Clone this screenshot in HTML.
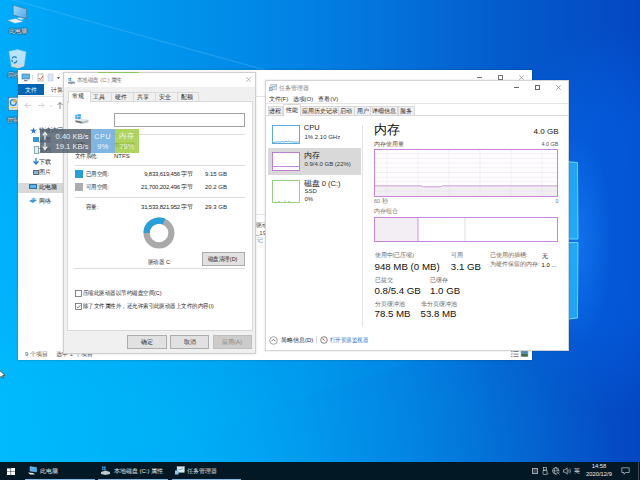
<!DOCTYPE html>
<html><head><meta charset="utf-8">
<style>
*{margin:0;padding:0;box-sizing:border-box}
html,body{width:640px;height:480px;overflow:hidden}
body{position:relative;font-family:"Liberation Sans",sans-serif;font-size:6px;color:#1e1e1e;background:#0870d8}
.a{position:absolute}
.t{position:absolute;white-space:nowrap;line-height:1}
#bg{left:0;top:0;width:640px;height:480px;
 background:
  radial-gradient(130px 210px at 610px 220px,rgba(4,112,252,0.34) 0%,rgba(4,112,252,0.33) 50%,rgba(4,112,252,0.18) 70%,rgba(4,112,252,0) 92%),
  radial-gradient(560px 380px at 60px 480px,rgba(0,194,255,0.6) 0%,rgba(0,194,255,0.58) 25%,rgba(0,194,255,0.34) 50%,rgba(0,194,255,0.2) 75%,rgba(0,194,255,0.08) 90%,rgba(0,194,255,0) 100%),
  linear-gradient(90deg,rgb(0,172,250) 0px,rgb(0,162,244) 60px,rgb(0,144,234) 200px,rgb(2,130,228) 300px,rgb(3,112,218) 400px,rgb(4,92,204) 500px,rgb(4,74,196) 620px,rgb(4,71,194) 640px);}
.win{background:#fff}
.s9{transform:scaleX(.91);transform-origin:0 50%}
.lbl{color:#fff;text-shadow:0 0 2px #000,0 0 1px #000;font-size:6px}
</style></head><body>
<div id="bg" class="a"></div>
<!-- light streak -->
<svg class="a" style="left:0;top:0" width="640" height="480">
 <line x1="0" y1="-3.6" x2="300" y2="79.8" stroke="rgba(130,210,255,0.22)" stroke-width="1.4"/>
 <polygon points="0,462 100,462 450,350 0,350" fill="rgba(0,200,255,0.06)"/>
 <!-- windows logo panes -->
 <defs><radialGradient id="glow" cx="0.5" cy="0.5" r="0.5"><stop offset="0" stop-color="rgba(30,140,255,0.5)"/><stop offset="0.6" stop-color="rgba(30,140,255,0.2)"/><stop offset="1" stop-color="rgba(30,140,255,0)"/></radialGradient></defs>
 <ellipse cx="576" cy="240" rx="36" ry="105" fill="url(#glow)"/>
 <polygon points="560,161 577.5,162.5 578,239 560,239" fill="rgba(40,190,255,0.72)"/>
 <polyline points="560,161 577.5,162.5 578,239 560,239" fill="none" stroke="rgba(120,235,255,0.9)" stroke-width="0.9"/>
 <polygon points="560,242.5 578,242.5 577.5,318 560,320" fill="rgba(40,190,255,0.72)"/>
 <polyline points="560,242.5 578,242.5 577.5,318 560,320" fill="none" stroke="rgba(120,235,255,0.9)" stroke-width="0.9"/>
</svg>

<!-- desktop icons -->
<svg class="a" style="left:0;top:0" width="40" height="120" viewBox="0 0 40 120">
 <defs>
  <linearGradient id="scr" x1="0" y1="0" x2="1" y2="1"><stop offset="0" stop-color="#a6dcfa"/><stop offset="1" stop-color="#4aa8ea"/></linearGradient>
 </defs>
 <polygon points="13.2,5.2 26.6,9.1 26.6,18.6 13.2,15.1" fill="url(#scr)" stroke="#5f6a73" stroke-width="0.6"/>
 <polygon points="16.7,18 20,17.4 24.5,19 21,19.8" fill="#dfe5ea"/>
 <polygon points="8,20.2 15.5,18.8 22.8,21.6 15,23.2" fill="#eaeef1" stroke="#c9d1d7" stroke-width="0.3"/>
 <polygon points="9,51.5 17.5,49.6 26,52 24,66 18.5,68 11.5,66.5" fill="rgba(222,240,250,0.82)" stroke="#a9d0e6" stroke-width="0.5"/>
 <polyline points="9,51.5 18,54 26,52" fill="none" stroke="#c8e4f2" stroke-width="0.5"/>
 <line x1="18" y1="54" x2="18.5" y2="68" stroke="#c0dcea" stroke-width="0.4"/>
 <polygon points="11.5,64 18.5,65.5 24,63.5 24,66 18.5,68 11.5,66.5" fill="rgba(236,206,186,0.7)"/>
 <path d="M12.2 58.3 A2.6 2.6 0 0 1 16.6 57.8 M17 60.5 A2.6 2.6 0 0 1 13.6 62.6 M12.6 62 A2.6 2.6 0 0 1 12 59.6" fill="none" stroke="#1f78d6" stroke-width="1.3"/>
 <rect x="8.3" y="97.2" width="10" height="13" fill="#cfe9f8" stroke="#2d5f94" stroke-width="0.6"/>
 <circle cx="13.3" cy="102.6" r="2.9" fill="none" stroke="#2b82d2" stroke-width="1.3"/>
 <path d="M13.3 99 L13.3 102.6 L16.7 101.8 A3.5 3.5 0 0 0 13.3 99 Z" fill="#f2a71e"/>
 <rect x="10.5" y="107" width="6" height="1.2" fill="#f0c24a"/>
</svg>
<div class="t lbl" style="left:9.3px;top:27.8px">此电脑</div>
<div class="t lbl" style="left:8px;top:71.8px">回收站</div>
<div class="t lbl" style="left:7px;top:117.4px">控制面板</div>

<!-- EXPLORER -->
<div id="explorer" class="a win" style="left:18px;top:70px;width:514px;height:290px;box-shadow:0 0 2px rgba(0,0,0,.3)">
 <!-- quick access toolbar -->
 <svg class="a" style="left:3px;top:3px" width="44" height="10" viewBox="0 0 44 10">
  <rect x="1" y="1" width="7.5" height="5" fill="#5db8ee" stroke="#2f6f9f" stroke-width="0.6"/>
  <rect x="3" y="7" width="3.5" height="1.2" fill="#7a8a96"/>
  <rect x="11.5" y="2" width="0.6" height="5" fill="#bbb"/>
  <rect x="17" y="1" width="5" height="7" fill="#fff" stroke="#8a8a8a" stroke-width="0.6"/>
  <path d="M18 5 L19.3 6.5 L22 3" stroke="#e8501a" stroke-width="0.9" fill="none"/>
  <rect x="27" y="1" width="5" height="7" fill="#dde8f4" stroke="#a9bfd6" stroke-width="0.5"/>
  <path d="M36 4.2 L39 4.2 L37.5 6 Z" fill="#333"/>
 </svg>
 <!-- title buttons -->
 <div class="a" style="left:459px;top:7px;width:5px;height:0.6px;background:#777"></div>
 <div class="a" style="left:479.5px;top:4.5px;width:5px;height:5px;border:0.6px solid #777"></div>
 <svg class="a" style="left:500.75px;top:4.5px" width="5" height="5" viewBox="0 0 5 5"><path d="M0.3 0.3 L4.7 4.7 M4.7 0.3 L0.3 4.7" stroke="#777" stroke-width="0.6"/></svg>
 <!-- ribbon tabs -->
 <div class="a" style="left:0;top:14px;width:26px;height:11px;background:#0066b4"></div>
 <div class="t" style="left:7px;top:16.5px;color:#fff;font-size:6px">文件</div>
 <div class="t" style="left:33px;top:16.5px;color:#333;font-size:6px">计算机</div>
 <div class="a" style="left:0;top:25.5px;width:514px;height:1px;background:#e3e3e3"></div>
 <!-- nav arrows -->
 <svg class="a" style="left:6px;top:31px" width="44" height="9" viewBox="0 0 44 9">
  <path d="M1 4.5 L7 4.5 M1 4.5 L3.5 2 M1 4.5 L3.5 7" stroke="#c0c0c0" stroke-width="0.7" fill="none"/>
  <path d="M14 4.5 L20 4.5 M20 4.5 L17.5 2 M20 4.5 L17.5 7" stroke="#c0c0c0" stroke-width="0.7" fill="none"/>
  <path d="M25.5 4 L27 5.5 L28.5 4" stroke="#c0c0c0" stroke-width="0.6" fill="none"/>
  <path d="M36 1.5 L36 8 M36 1.5 L33.5 4 M36 1.5 L38.5 4" stroke="#555" stroke-width="0.7" fill="none"/>
 </svg>
 <!-- sidebar -->
 <svg class="a" style="left:12px;top:57px" width="7" height="7" viewBox="0 0 10 10"><polygon points="5,0.5 6.3,3.8 9.8,3.8 7,6 8,9.5 5,7.4 2,9.5 3,6 0.2,3.8 3.7,3.8" fill="#2a7ad2"/></svg>
 <div class="t" style="left:21px;top:56.5px;color:#333">快速访问</div>
 <div class="a" style="left:15px;top:67px;width:6px;height:5px;background:#3596e0"></div>
 <div class="t" style="left:21px;top:67px;color:#333">桌面</div>
 <div class="a" style="left:16px;top:76px;width:5px;height:8px;background:#e8eef4;border:0.5px solid #8aa"></div>
 <div class="t" style="left:21px;top:77px;color:#333">文档</div>
 <svg class="a" style="left:15px;top:88px" width="6" height="7" viewBox="0 0 6 7"><path d="M3 0 L3 5.5 M0.5 3.2 L3 6 L5.5 3.2" stroke="#2a7ad2" stroke-width="1.3" fill="none"/></svg>
 <div class="t" style="left:21px;top:89px;color:#333">下载</div>
 <div class="a" style="left:15px;top:100px;width:6px;height:4.5px;background:#8fb4cc;border:0.5px solid #667"></div>
 <div class="t" style="left:21px;top:99px;color:#333">图片</div>
 <div class="a" style="left:0;top:112.5px;width:45px;height:10px;background:#d9d9d9"></div>
 <div class="a" style="left:11px;top:114px;width:8px;height:5px;background:#58b6f0;border:0.5px solid #2f6f9f"></div>
 <div class="t" style="left:21px;top:114px;color:#222">此电脑</div>
 <svg class="a" style="left:11px;top:127px" width="8" height="7" viewBox="0 0 8 7"><polygon points="0,4 4,2 8,3 4,6" fill="#3b9ae0"/><polygon points="2,2 5,0.5 7,1.5 4,3" fill="#74c0f0"/></svg>
 <div class="t" style="left:21px;top:128px;color:#333">网络</div>
 <!-- content snippets visible between windows -->
 <div class="a" style="left:238px;top:144px;width:10px;height:0.6px;background:#e5e5e5"></div>
 <div class="t" style="left:238px;top:152px;color:#444;font-size:6px">驱动</div>
 <div class="t" style="left:238px;top:160px;color:#444;font-size:6px">_19</div>
 <div class="t" style="left:239px;top:167px;color:#999;font-size:6px">记</div>
 <!-- status bar -->
 <div class="t" style="left:7px;top:281px;color:#555">9 个项目</div>
 <div class="t" style="left:38px;top:281px;color:#555">选中 1 个项目</div>
 <svg class="a" style="left:493px;top:280px" width="18" height="8" viewBox="0 0 18 8">
  <rect x="0" y="1" width="1.6" height="1.2" fill="#8aa"/><rect x="2.5" y="1.2" width="5" height="0.8" fill="#666"/>
  <rect x="0" y="3.5" width="1.6" height="1.2" fill="#8aa"/><rect x="2.5" y="3.7" width="5" height="0.8" fill="#666"/>
  <rect x="0" y="6" width="1.6" height="1.2" fill="#d88"/><rect x="2.5" y="6.2" width="5" height="0.8" fill="#666"/>
  <rect x="10" y="1" width="7" height="5.5" fill="#4a8fc0" stroke="#aaa" stroke-width="0.6"/>
  <rect x="10.5" y="4" width="6" height="2.5" fill="#3d7040"/>
 </svg>
</div>

<!-- PROPERTIES DIALOG -->
<div id="props" class="a" style="left:63px;top:72px;width:193px;height:282px;background:#f0f0f0;border:1px solid #cfcfcf;box-shadow:0 0 2px rgba(0,0,0,.15)">
 <div class="a" style="left:0;top:0;width:191px;height:14px;background:#fff"></div>
 <svg class="a" style="left:4px;top:5px" width="7" height="6" viewBox="0 0 7 6">
  <rect x="0.5" y="0" width="1.2" height="1.2" fill="#1e90e0"/><rect x="2" y="0" width="1.2" height="1.2" fill="#1e90e0"/>
  <rect x="0.5" y="1.5" width="1.2" height="1.2" fill="#1e90e0"/><rect x="2" y="1.5" width="1.2" height="1.2" fill="#1e90e0"/>
  <polygon points="0,4 4,3.2 7,4 7,5.5 3,6 0,5.5" fill="#8a9aa6"/>
 </svg>
 <div class="t s9" style="left:13px;top:4px;color:#777;font-size:6px">本地磁盘 (C:) 属性</div>
 <svg class="a" style="left:181.9px;top:4.1px" width="5" height="5" viewBox="0 0 5 5"><path d="M0.3 0.3 L4.7 4.7 M4.7 0.3 L0.3 4.7" stroke="#888" stroke-width="0.6"/></svg>
 <!-- tabs -->
 <div class="a" style="left:26px;top:19px;width:22px;height:10px;background:#f0f0f0;border:1px solid #d9d9d9;border-bottom:none"></div>
 <div class="t" style="left:29px;top:21px">工具</div>
 <div class="a" style="left:47px;top:19px;width:23px;height:10px;background:#f0f0f0;border:1px solid #d9d9d9;border-bottom:none"></div>
 <div class="t" style="left:51px;top:21px">硬件</div>
 <div class="a" style="left:69px;top:19px;width:23px;height:10px;background:#f0f0f0;border:1px solid #d9d9d9;border-bottom:none"></div>
 <div class="t" style="left:73px;top:21px">共享</div>
 <div class="a" style="left:91px;top:19px;width:23px;height:10px;background:#f0f0f0;border:1px solid #d9d9d9;border-bottom:none"></div>
 <div class="t" style="left:95px;top:21px">安全</div>
 <div class="a" style="left:113px;top:19px;width:22px;height:10px;background:#f0f0f0;border:1px solid #d9d9d9;border-bottom:none"></div>
 <div class="t" style="left:117px;top:21px">配额</div>
 <!-- content panel -->
 <div class="a" style="left:3px;top:28px;width:186px;height:230px;background:#fff;border:1px solid #d9d9d9"></div>
 <div class="a" style="left:4px;top:17.5px;width:23px;height:12px;background:#fff;border:1px solid #d9d9d9;border-bottom:none"></div>
 <div class="t" style="left:7.5px;top:20px">常规</div>
 <!-- drive icon -->
 <svg class="a" style="left:11px;top:40.5px" width="14" height="10" viewBox="0 0 14 10">
  <polygon points="0.3,0.9 2.6,0.5 2.6,2.6 0.3,2.8" fill="#2fa3ee"/><polygon points="3,0.4 5.8,0 5.8,2.6 3,2.6" fill="#2fa3ee"/>
  <polygon points="0.3,3.1 2.6,3 2.6,5 0.3,4.8" fill="#2fa3ee"/><polygon points="3,3 5.8,3 5.8,5.3 3,5" fill="#2fa3ee"/>
  <polygon points="0.3,6.2 6,4.6 13.4,6.2 7.6,7.8" fill="#e6eaed" stroke="#b9c2c8" stroke-width="0.3"/>
  <polygon points="0.3,6.2 7.6,7.8 7.6,9.8 0.3,8.2" fill="#8d979e"/>
  <polygon points="7.6,7.8 13.4,6.2 13.4,8.2 7.6,9.8" fill="#b3bcc2"/>
  <line x1="1.2" y1="7.3" x2="6.6" y2="8.5" stroke="#3c4348" stroke-width="0.6"/>
 </svg>
 <div class="a" style="left:50px;top:39.5px;width:131px;height:14px;background:#fff;border:1px solid #a2a2a2"></div>
 <div class="a" style="left:11px;top:60.5px;width:170px;height:1px;background:#dcdcdc"></div>
 <div class="t s9" style="left:11px;top:69px">类型:</div>
 <div class="t s9" style="left:50px;top:69px">本地磁盘</div>
 <div class="t s9" style="left:11px;top:80px">文件系统:</div>
 <div class="t" style="left:50px;top:80px">NTFS</div>
 <div class="a" style="left:11px;top:91.5px;width:170px;height:1px;background:#dcdcdc"></div>
 <div class="a" style="left:11px;top:97px;width:8px;height:8px;background:#26a0da"></div>
 <div class="t s9" style="left:22px;top:98px">已用空间:</div>
 <div class="t" style="left:60px;top:98px;width:69px;text-align:right;letter-spacing:-0.2px">9,833,619,456 字节</div>
 <div class="t" style="left:141px;top:98px">9.15 GB</div>
 <div class="a" style="left:11px;top:110px;width:8px;height:8px;background:#adadad"></div>
 <div class="t s9" style="left:22px;top:111px">可用空间:</div>
 <div class="t" style="left:60px;top:111px;width:69px;text-align:right;letter-spacing:-0.2px">21,700,202,496 字节</div>
 <div class="t" style="left:141px;top:111px">20.2 GB</div>
 <div class="a" style="left:11px;top:124px;width:170px;height:1px;background:#dcdcdc"></div>
 <div class="t s9" style="left:22px;top:131px">容量:</div>
 <div class="t" style="left:60px;top:131px;width:69px;text-align:right;letter-spacing:-0.2px">31,533,821,952 字节</div>
 <div class="t" style="left:141px;top:131px">29.3 GB</div>
 <!-- donut -->
 <svg class="a" style="left:78px;top:143px" width="34" height="34" viewBox="0 0 34 34">
  <circle cx="17" cy="17" r="12.4" fill="none" stroke="#a9a9a9" stroke-width="6.2"/>
  <path d="M4.6 17 A12.4 12.4 0 0 1 22.04 5.67" fill="none" stroke="#26a0da" stroke-width="6.2"/>
 </svg>
 <div class="t s9" style="left:84px;top:186px">驱动器 C:</div>
 <div class="a" style="left:137.5px;top:178.5px;width:43px;height:14px;background:#e1e1e1;border:1px solid #adadad"></div>
 <div class="t s9" style="left:144px;top:182.5px">磁盘清理(D)</div>
 <div class="a" style="left:10px;top:195px;width:171px;height:1px;background:#dcdcdc"></div>
 <svg class="a" style="left:10.5px;top:216.5px" width="7" height="7" viewBox="0 0 7 7"><rect x="0.5" y="0.5" width="6" height="6" fill="#fff" stroke="#6a6a6a" stroke-width="0.8"/></svg>
 <div class="t s9" style="left:19px;top:217px">压缩此驱动器以节约磁盘空间(C)</div>
 <svg class="a" style="left:10.5px;top:230.3px" width="7" height="7" viewBox="0 0 7 7"><rect x="0.5" y="0.5" width="6" height="6" fill="#fff" stroke="#6a6a6a" stroke-width="0.8"/><path d="M1.5 3.6 L2.9 5 L5.6 1.9" stroke="#444" stroke-width="0.7" fill="none"/></svg>
 <div class="t s9" style="left:19px;top:230px">除了文件属性外，还允许索引此驱动器上文件的内容(I)</div>
 <!-- buttons -->
 <div class="a" style="left:62.5px;top:262px;width:40px;height:14px;background:#e1e1e1;border:1px solid #adadad"></div>
 <div class="t" style="left:77px;top:266px">确定</div>
 <div class="a" style="left:106px;top:262px;width:39px;height:14px;background:#e1e1e1;border:1px solid #adadad"></div>
 <div class="t" style="left:120px;top:266px">取消</div>
 <div class="a" style="left:149px;top:262px;width:39px;height:14px;background:#cccccc;border:1px solid #bfbfbf"></div>
 <div class="t" style="left:158px;top:266px;color:#838383">应用(A)</div>
</div>

<div class="a" style="left:98px;top:72px;width:41px;height:1px;background:#8cc860"></div>
<!-- TASK MANAGER -->
<div id="tm" class="a win" style="left:265px;top:80px;width:304px;height:271px;border:1px solid #d4d4d4;box-shadow:0 0 2px rgba(0,0,0,.15)">
 <svg class="a" style="left:2.9px;top:3.2px" width="8" height="7" viewBox="0 0 8 7">
  <rect x="1.8" y="0.4" width="6" height="5" fill="#e4ecf1" stroke="#8a9aa6" stroke-width="0.5"/>
  <path d="M2.4 3.8 L3.8 2.3 L4.8 3.3 L7 1.3" stroke="#2a9ad8" stroke-width="0.7" fill="none"/>
  <rect x="0.2" y="3.6" width="3" height="3.2" fill="#a9cfe4" stroke="#6e8896" stroke-width="0.4"/>
 </svg>
 <div class="t" style="left:13px;top:3.7px;color:#777">任务管理器</div>
 <div class="a" style="left:248.4px;top:6.3px;width:5px;height:0.6px;background:#666"></div>
 <div class="a" style="left:269.25px;top:4px;width:4.8px;height:4.8px;border:0.6px solid #666"></div>
 <svg class="a" style="left:290px;top:4px" width="5" height="5" viewBox="0 0 5 5"><path d="M0.3 0.3 L4.7 4.7 M4.7 0.3 L0.3 4.7" stroke="#666" stroke-width="0.6"/></svg>
 <div class="a" style="left:0;top:22px;width:302px;height:0.6px;background:#e6e6e6"></div>
 <div class="t" style="left:2.5px;top:14.5px;color:#333">文件(F)</div>
 <div class="t" style="left:26.5px;top:14.5px;color:#333">选项(O)</div>
 <div class="t" style="left:52.25px;top:14.5px;color:#333">查看(V)</div>
 <!-- tabs -->
 <div class="a" style="left:0;top:33.5px;width:302px;height:1px;background:#d9d9d9"></div>
 <div class="a" style="left:1.75px;top:24.5px;width:15.5px;height:9.5px;background:#f0f0f0;border:1px solid #d9d9d9;border-bottom:none"></div>
 <div class="t" style="left:3px;top:26.5px;color:#222">进程</div>
 <div class="a" style="left:34px;top:24.5px;width:38.5px;height:9.5px;background:#f0f0f0;border:1px solid #d9d9d9;border-bottom:none"></div>
 <div class="t" style="left:35.5px;top:26.5px;color:#222">应用历史记录</div>
 <div class="a" style="left:71.75px;top:24.5px;width:16.75px;height:9.5px;background:#f0f0f0;border:1px solid #d9d9d9;border-bottom:none"></div>
 <div class="t" style="left:74px;top:26.5px;color:#222">启动</div>
 <div class="a" style="left:88px;top:24.5px;width:16.75px;height:9.5px;background:#f0f0f0;border:1px solid #d9d9d9;border-bottom:none"></div>
 <div class="t" style="left:90.5px;top:26.5px;color:#222">用户</div>
 <div class="a" style="left:104.25px;top:24.5px;width:28px;height:9.5px;background:#f0f0f0;border:1px solid #d9d9d9;border-bottom:none"></div>
 <div class="t" style="left:106px;top:26.5px;color:#222">详细信息</div>
 <div class="a" style="left:131.75px;top:24.5px;width:16.75px;height:9.5px;background:#f0f0f0;border:1px solid #d9d9d9;border-bottom:none"></div>
 <div class="t" style="left:134px;top:26.5px;color:#222">服务</div>
 <div class="a" style="left:16.5px;top:23px;width:18px;height:11.5px;background:#fff;border:1px solid #d9d9d9;border-bottom:none"></div>
 <div class="t" style="left:19.5px;top:25.5px;color:#222">性能</div>
 <!-- left panel -->
 <div class="a" style="left:1.6px;top:67.2px;width:93px;height:26.5px;background:#d9d9d9"></div>
 <svg class="a" style="left:6px;top:44px" width="28" height="19" viewBox="0 0 28 19">
  <rect x="0.5" y="0.5" width="27" height="18" fill="#fff" stroke="#4aa3df" stroke-width="0.9"/>
  <path d="M1 17.5 L4 17 L6 16.8 L8 17.2 L10 16.5 L12 17 L14 16 L15 17 L17 15.8 L18 17 L20 16.6 L22 17.2 L27 17" stroke="#4aa3df" stroke-width="0.8" fill="none"/>
 </svg>
 <div class="t" style="left:37.75px;top:43.3px;font-size:7.5px;color:#1a1a1a">CPU</div>
 <div class="t" style="left:38.5px;top:52.5px;color:#333">1% 2.10 GHz</div>
 <svg class="a" style="left:6px;top:71px" width="28" height="19" viewBox="0 0 28 19">
  <rect x="0.5" y="0.5" width="27" height="18" fill="#fff" stroke="#b56bd0" stroke-width="0.85"/>
  <line x1="1" y1="14.5" x2="27" y2="14.5" stroke="#b56bd0" stroke-width="0.8"/>
 </svg>
 <div class="t" style="left:37.75px;top:71px;font-size:7.5px;color:#1a1a1a">内存</div>
 <div class="t" style="left:38.5px;top:79.5px;color:#333">0.9/4.0 GB (22%)</div>
 <svg class="a" style="left:6px;top:99px" width="28" height="23" viewBox="0 0 28 23">
  <rect x="0.5" y="0.5" width="27" height="22" fill="#fff" stroke="#80c462" stroke-width="0.8"/><path d="M6 21.5 L8 21.5 M12 21.3 L14 21.3 M16 21.5 L18 21.5" stroke="#80c462" stroke-width="0.6"/>
 </svg>
 <div class="t" style="left:37.75px;top:98.5px;font-size:7.5px;color:#1a1a1a">磁盘 0 (C:)</div>
 <div class="t" style="left:38.5px;top:107px;color:#333">SSD</div>
 <div class="t" style="left:38.5px;top:115px;color:#333">0%</div>
 <div class="a" style="left:96px;top:44px;width:0.7px;height:202px;background:#e3e3e3"></div>
 <!-- right panel -->
 <div class="t" style="left:107.5px;top:43.3px;font-size:12.5px;color:#111">内存</div>
 <div class="t" style="left:232px;top:46.5px;width:60.5px;text-align:right;font-size:8px;color:#111">4.0 GB</div>
 <div class="t" style="left:108px;top:60.5px;font-size:5.5px;color:#555">内存使用量</div>
 <div class="t" style="left:252px;top:60.5px;width:40.5px;text-align:right;font-size:5.5px;color:#555">4.0 GB</div>
 <svg class="a" style="left:108px;top:68px" width="185" height="48" viewBox="0 0 185 48">
  <g stroke="#eedff3" stroke-width="0.6">
   <line x1="13" y1="0" x2="13" y2="48"/><line x1="44" y1="0" x2="44" y2="48"/><line x1="75" y1="0" x2="75" y2="48"/>
   <line x1="106" y1="0" x2="106" y2="48"/><line x1="137" y1="0" x2="137" y2="48"/><line x1="168" y1="0" x2="168" y2="48"/>
   <line x1="0" y1="4.7" x2="185" y2="4.7"/><line x1="0" y1="9.4" x2="185" y2="9.4"/><line x1="0" y1="14.1" x2="185" y2="14.1"/>
   <line x1="0" y1="18.8" x2="185" y2="18.8"/><line x1="0" y1="23.5" x2="185" y2="23.5"/><line x1="0" y1="28.2" x2="185" y2="28.2"/>
   <line x1="0" y1="32.9" x2="185" y2="32.9"/><line x1="0" y1="42.3" x2="185" y2="42.3"/>
  </g>
  <path d="M1 36.8 L47 36.8 L49.5 37.8 L66 37.8 L68.5 36.8 L184 36.8 L184 47 L1 47 Z" fill="#f1eef2"/>
  <line x1="0" y1="42.3" x2="185" y2="42.3" stroke="#e8dcee" stroke-width="0.5"/>
  <line x1="13" y1="37" x2="13" y2="48" stroke="#e6dcea" stroke-width="0.5"/><line x1="44" y1="37" x2="44" y2="48" stroke="#e6dcea" stroke-width="0.5"/><line x1="75" y1="37" x2="75" y2="48" stroke="#e6dcea" stroke-width="0.5"/><line x1="106" y1="37" x2="106" y2="48" stroke="#e6dcea" stroke-width="0.5"/><line x1="137" y1="37" x2="137" y2="48" stroke="#e6dcea" stroke-width="0.5"/><line x1="168" y1="37" x2="168" y2="48" stroke="#e6dcea" stroke-width="0.5"/>
  <path d="M1 36.8 L47 36.8 L49.5 37.8 L66 37.8 L68.5 36.8 L184 36.8" stroke="#c283d8" stroke-width="0.8" fill="none"/>
  <rect x="0.5" y="0.5" width="183" height="47" fill="none" stroke="#c07ad8" stroke-width="0.9"/>
 </svg>
 <div class="t" style="left:108px;top:117.8px;font-size:5.5px;color:#777">60 秒</div>
 <div class="t" style="left:282px;top:117.8px;width:10.5px;text-align:right;font-size:5.5px;color:#777">0</div>
 <div class="t" style="left:108px;top:128.3px;font-size:5.5px;color:#777">内存组合</div>
 <svg class="a" style="left:108px;top:136px" width="185" height="25" viewBox="0 0 185 25">
  <rect x="1" y="1" width="43" height="23" fill="#f2eef4"/>
  <line x1="44" y1="0" x2="44" y2="25" stroke="#c07ad8" stroke-width="0.8"/>
  <line x1="91" y1="0" x2="91" y2="25" stroke="#d8c8de" stroke-width="0.7"/>
  <rect x="0.5" y="0.5" width="183" height="24" fill="none" stroke="#c07ad8" stroke-width="0.9"/>
 </svg>
 <!-- stats -->
 <div class="t" style="left:108.5px;top:172.3px;font-size:5.5px;color:#666">使用中(已压缩)</div>
 <div class="t" style="left:108.5px;top:181px;font-size:9.7px;color:#111">948 MB (0 MB)</div>
 <div class="t" style="left:184.8px;top:172.3px;font-size:5.5px;color:#666">可用</div>
 <div class="t" style="left:184.8px;top:181px;font-size:9.7px;color:#111">3.1 GB</div>
 <div class="t" style="left:224px;top:172.3px;font-size:5.5px;color:#666">已使用的插槽:</div>
 <div class="t" style="left:275.5px;top:172px;font-size:6px;color:#111">无</div>
 <div class="t" style="left:224px;top:181.3px;font-size:5.5px;color:#666">为硬件保留的内存:</div>
 <div class="t" style="left:275.5px;top:181px;font-size:6px;color:#111">1.0 ...</div>
 <div class="t" style="left:108.5px;top:196.5px;font-size:5.5px;color:#666">已提交</div>
 <div class="t" style="left:108.5px;top:204.8px;font-size:9.7px;color:#111">0.8/5.4 GB</div>
 <div class="t" style="left:164px;top:196.5px;font-size:5.5px;color:#666">已缓存</div>
 <div class="t" style="left:164px;top:204.8px;font-size:9.7px;color:#111">1.0 GB</div>
 <div class="t" style="left:108.5px;top:220.5px;font-size:5.5px;color:#666">分页缓冲池</div>
 <div class="t" style="left:108.5px;top:228.3px;font-size:9.7px;color:#111">78.5 MB</div>
 <div class="t" style="left:154.5px;top:220.5px;font-size:5.5px;color:#666">非分页缓冲池</div>
 <div class="t" style="left:154.5px;top:228.3px;font-size:9.7px;color:#111">53.8 MB</div>
 <!-- bottom -->
 <svg class="a" style="left:3px;top:254.5px" width="9" height="9" viewBox="0 0 9 9"><circle cx="4.5" cy="4.5" r="3.8" fill="none" stroke="#666" stroke-width="0.6"/><path d="M2.6 5.3 L4.5 3.4 L6.4 5.3" stroke="#444" stroke-width="0.7" fill="none"/></svg>
 <div class="t" style="left:15px;top:255.7px;color:#222">简略信息(D)</div>
 <div class="a" style="left:50px;top:255px;width:0.6px;height:7px;background:#d8d8d8"></div>
 <svg class="a" style="left:54px;top:254.5px" width="8" height="8" viewBox="0 0 8 8"><circle cx="4" cy="4" r="3.3" fill="#fff" stroke="#555" stroke-width="0.7"/><path d="M2.5 2.3 L4.5 4.5" stroke="#d02020" stroke-width="0.9"/></svg>
 <div class="t s9" style="left:63.6px;top:255.7px;color:#1a6fc8">打开资源监视器</div>
</div>

<!-- NET OVERLAY -->
<div class="a" style="left:39.7px;top:129px;width:51px;height:23.5px;background:rgba(72,85,100,0.78)"></div>
<div class="a" style="left:90.7px;top:129px;width:24.3px;height:23.5px;background:rgba(110,172,222,0.88)"></div>
<div class="a" style="left:115px;top:129px;width:24px;height:23.5px;background:rgba(159,203,61,0.82)"></div>
<svg class="a" style="left:41.5px;top:131px" width="6" height="20" viewBox="0 0 6 20">
 <path d="M3 8.5 L3 2 M0.8 4.3 L3 1.5 L5.2 4.3" stroke="#f0f0f0" stroke-width="1.2" fill="none"/>
 <path d="M3 11.5 L3 18 M0.8 15.7 L3 18.5 L5.2 15.7" stroke="#f0f0f0" stroke-width="1.2" fill="none"/>
</svg>
<div class="t" style="left:46px;top:132.6px;width:42.5px;text-align:right;font-size:7.6px;color:#eef2f5">0.40 KB/s</div>
<div class="t" style="left:46px;top:143.3px;width:42.5px;text-align:right;font-size:7.6px;color:#eef2f5">19.1 KB/s</div>
<div class="t" style="left:90.7px;top:133px;width:24.3px;text-align:center;font-size:7px;letter-spacing:0.8px;color:#f4f8fb">CPU</div>
<div class="t" style="left:90.7px;top:143.3px;width:24.3px;text-align:center;font-size:7.6px;color:#f4f8fb">9%</div>
<div class="t" style="left:115px;top:133px;width:24px;text-align:center;font-size:6.5px;letter-spacing:1.2px;color:#f4f8ee">内存</div>
<div class="t" style="left:115px;top:143.3px;width:24px;text-align:center;font-size:7.6px;color:#eef5e2">79%</div>

<svg class="a" style="left:0;top:366px" width="8" height="14" viewBox="0 366 8 14"><polygon points="-1.5,369.5 5,375.3 2.7,375.5 3.9,378 3,378.5 1.8,376 -1.5,378.2" fill="#fff" stroke="#222" stroke-width="0.6"/></svg>
<!-- TASKBAR -->
<div id="taskbar" class="a" style="left:0;top:462px;width:640px;height:18px;background:#021824">
 <svg class="a" style="left:7px;top:5.5px" width="8" height="7.5" viewBox="0 0 8 7.5">
  <rect x="0" y="0.4" width="3.6" height="3.2" fill="#fff"/><rect x="4.1" y="0" width="3.9" height="3.6" fill="#fff"/>
  <rect x="0" y="4" width="3.6" height="3.1" fill="#fff"/><rect x="4.1" y="4" width="3.9" height="3.5" fill="#fff"/>
 </svg>
 <!-- item 1 -->
 <svg class="a" style="left:28px;top:4px" width="9" height="9" viewBox="0 0 9 9">
  <polygon points="2,0.5 8.5,1.5 8.5,6 2,5" fill="#4cb0f0" stroke="#9fd6f8" stroke-width="0.4"/>
  <polygon points="0,6.5 5,7 7,8.5 2,8.5" fill="#e8eef2"/>
 </svg>
 <div class="t" style="left:40px;top:5.7px;color:#e8e8e8;font-size:6px">此电脑</div>
 <div class="a" style="left:25.3px;top:16.5px;width:69.4px;height:1.5px;background:#7fbbe6"></div>
 <!-- item 2 -->
 <svg class="a" style="left:101px;top:4px" width="9" height="9" viewBox="0 0 9 9">
  <rect x="1" y="0.5" width="1.6" height="1.6" fill="#2aa0f0"/><rect x="3" y="0.5" width="1.6" height="1.6" fill="#2aa0f0"/>
  <rect x="1" y="2.5" width="1.6" height="1.6" fill="#2aa0f0"/><rect x="3" y="2.5" width="1.6" height="1.6" fill="#2aa0f0"/>
  <polygon points="0,6 4.5,4.5 9,6 9,8 4.5,9 0,8" fill="#c0c8ce"/>
 </svg>
 <div class="t" style="left:113.75px;top:5.7px;color:#e8e8e8;font-size:6px">本地磁盘 (C:) 属性</div>
 <div class="a" style="left:98px;top:16.5px;width:69.5px;height:1.5px;background:#7fbbe6"></div>
 <!-- item 3 -->
 <svg class="a" style="left:175px;top:4px" width="10" height="9" viewBox="0 0 10 9">
  <rect x="2" y="0.5" width="7.5" height="6" fill="#dfe8ee" stroke="#9aa" stroke-width="0.4"/>
  <path d="M3 4.5 L4.5 3 L5.5 4 L8 2" stroke="#3aa0e0" stroke-width="0.8" fill="none"/>
  <rect x="0" y="4.5" width="3.5" height="4" fill="#8fc8e8"/>
 </svg>
 <div class="t" style="left:187.3px;top:5.7px;color:#e8e8e8;font-size:6px">任务管理器</div>
 <div class="a" style="left:171.7px;top:16.5px;width:69.5px;height:1.5px;background:#7fbbe6"></div>
 <!-- tray -->
 <div class="a" style="left:531.6px;top:5.8px;width:6px;height:5.8px;background:#3a4450;border:0.6px solid #9aa4ac"></div>
 <svg class="a" style="left:542px;top:5px" width="7" height="8" viewBox="0 0 7 8"><rect x="1.5" y="0.5" width="3" height="3" fill="none" stroke="#ddd" stroke-width="0.6"/><rect x="1" y="3" width="4" height="4.5" rx="1" fill="none" stroke="#ddd" stroke-width="0.6"/><path d="M5 7.5 L6.5 6.5" stroke="#ddd" stroke-width="0.5"/></svg>
 <svg class="a" style="left:551.5px;top:4.8px" width="8" height="8" viewBox="0 0 8 8"><circle cx="3.8" cy="3.8" r="3.2" fill="none" stroke="#e8e8e8" stroke-width="0.6"/><ellipse cx="3.8" cy="3.8" rx="1.4" ry="3.2" fill="none" stroke="#e8e8e8" stroke-width="0.5"/><line x1="0.6" y1="3.8" x2="7" y2="3.8" stroke="#e8e8e8" stroke-width="0.5"/><rect x="4.5" y="4.5" width="3.3" height="3.3" fill="#021824"/><path d="M5 5 L7.5 7.5 M7.5 5 L5 7.5" stroke="#ddd" stroke-width="0.5"/></svg>
 <svg class="a" style="left:562.5px;top:5px" width="9" height="8" viewBox="0 0 9 8"><polygon points="0.5,2.8 2,2.8 4.2,0.8 4.2,7.2 2,5.2 0.5,5.2" fill="none" stroke="#e8e8e8" stroke-width="0.6"/><path d="M5.5 2.5 Q6.5 4 5.5 5.5 M6.8 1.5 Q8.3 4 6.8 6.5" stroke="#e8e8e8" stroke-width="0.5" fill="none"/></svg>
 <div class="t" style="left:574px;top:5.6px;color:#eee;font-size:6.2px">英</div>
 <div class="t" style="left:585px;top:1.8px;width:28px;text-align:center;color:#eee;font-size:5.8px">14:58</div>
 <div class="t" style="left:585px;top:9.5px;width:28px;text-align:center;color:#eee;font-size:5.8px">2020/12/9</div>
 <svg class="a" style="left:621px;top:5px" width="9" height="8" viewBox="0 0 9 8"><path d="M0.8 0.8 L8.2 0.8 L8.2 5.5 L4.5 5.5 L3 7.3 L3 5.5 L0.8 5.5 Z" fill="none" stroke="#e8e8e8" stroke-width="0.6"/></svg>
 <div class="a" style="left:638px;top:0;width:1px;height:18px;background:#3c4650"></div>
</div>

</body></html>
